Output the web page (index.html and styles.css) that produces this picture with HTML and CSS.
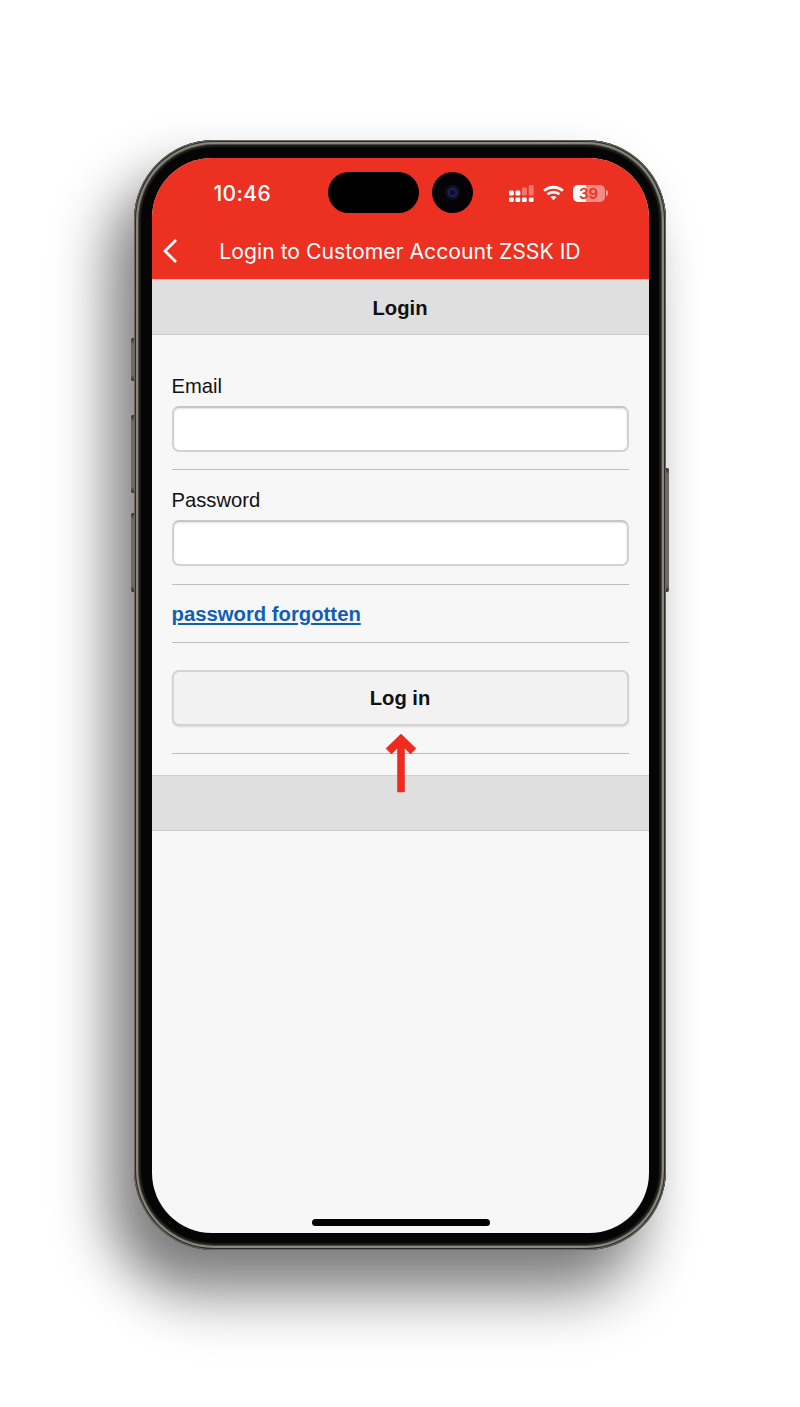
FILE: index.html
```html
<!DOCTYPE html>
<html>
<head>
  <meta charset="utf-8">
  <title>Login</title>
  <link rel="stylesheet" href="styles.css">
</head>
<body>
  <div class="stage">
    <div class="phone">
      <span class="side-btn side-mute"></span>
      <span class="side-btn side-up"></span>
      <span class="side-btn side-down"></span>
      <span class="side-btn side-power"></span>

      <div class="bezel">
        <div class="screen">
          <div class="app-header">
            <div class="status-bar">
              <span class="clock">10:46</span>
              <div class="status-icons">
                <svg class="signal" width="25" height="17" viewBox="0 0 25 17">
                  <g fill="#fff">
                    <rect x="0" y="12.500" width="4.800" height="4.500" rx="1.200"/>
                    <rect x="6.500" y="12.500" width="4.800" height="4.500" rx="1.200"/>
                    <rect x="13" y="12.500" width="4.800" height="4.500" rx="1.200"/>
                    <rect x="19.800" y="12.500" width="4.800" height="4.500" rx="1.200"/>
                    <rect x="0" y="5.500" width="4.800" height="5" rx="1.200"/>
                    <rect x="6.500" y="5.500" width="4.800" height="5" rx="1.200"/>
                    <rect x="13" y="2.500" width="4.800" height="8" rx="1.200" opacity="0.35"/>
                    <rect x="19.800" y="0" width="4.800" height="10.500" rx="1.200" opacity="0.35"/>
                  </g>
                </svg>
                <svg class="wifi" width="21" height="16" viewBox="0 0 22 16">
                  <g fill="none" stroke="#fff" stroke-width="3">
                    <path d="M1.200 5.600C6.600.7 15.400.7 20.800 5.600"/>
                    <path d="M4.800 9.300C8.200 6.300 13.800 6.300 17.200 9.300"/>
                  </g>
                  <path d="M7.900 12.200C9.700 10.800 12.300 10.800 14.100 12.200L11 15.600Z" fill="#fff"/>
                </svg>
                <div class="battery">
                  <div class="battery-body">
                    <span class="battery-level">39</span>
                  </div>
                  <span class="battery-cap"></span>
                </div>
              </div>
            </div>
            <div class="title-bar">
              <svg class="back" width="16" height="26" viewBox="0 0 16 26">
                <path d="M14 2 3 13l11 11" fill="none" stroke="#fff" stroke-width="2.800"/>
              </svg>
              <span class="title">Login to Customer Account ZSSK ID</span>
            </div>
          </div>

          <div class="band band-title">Login</div>

          <div class="form">
            <div class="field">
              <label for="email">Email</label>
              <input type="text" id="email">
            </div>
            <div class="field field-password">
              <label for="password">Password</label>
              <input type="password" id="password">
            </div>
            <div class="link-row">
              <a href="#">password forgotten</a>
            </div>
            <div class="button-row">
              <button class="btn-login">Log in</button>
            </div>
          </div>

          <div class="band band-empty"></div>
          <div class="home-bar"></div>
        </div>

        <div class="island"></div>
        <div class="camera"><span class="lens"></span></div>
        <svg class="arrow" width="32" height="60" viewBox="0 0 32 60">
          <path d="M16 1 31 15.500l-5.500 5.500-6-6V59h-7V15l-6 6L1 15.500Z" fill="#f02a1e" stroke="#d9261a" stroke-width="0.500"/>
        </svg>
      </div>
    </div>
  </div>
</body>
</html>
```

FILE: styles.css
```css
html, body {
  margin: 0;
  padding: 0;
  background: #fff;
}

body {
  font-family: "Liberation Sans", Arial, sans-serif;
  color: #111;
}

.stage {
  width: 800px;
  height: 1407px;
  padding-top: 140px;
  box-sizing: border-box;
  display: flex;
  justify-content: center;
  overflow: hidden;
}

/* phone frame */
.phone {
  position: relative;
  width: 532px;
  height: 1110px;
  box-sizing: border-box;
  padding: 7px;
  border-radius: 80px;
  background: #1c1b19;
  box-shadow:
    inset 0 0 0 1px #6b675f,
    inset 0 0 0 2px #2b2a27,
    inset 0 0 0 4px #8a867d,
    inset 0 0 0 5px #4a4842,
    -26px 34px 55px rgba(0, 0, 0, 0.45),
    -10px 70px 60px -10px rgba(0, 0, 0, 0.14);
}

.bezel {
  position: relative;
  height: 100%;
  box-sizing: border-box;
  padding: 11px 10.500px 10px;
  border-radius: 73px;
  background: #050505;
}

.screen {
  position: relative;
  display: flex;
  flex-direction: column;
  height: 100%;
  border-radius: 60px;
  overflow: hidden;
  background: #f7f7f7;
}

.side-btn {
  position: absolute;
  left: -3px;
  width: 3px;
  background: linear-gradient(180deg, #2c2a27 0, #6e6a64 6px, #6e6a64 calc(100% - 6px), #2c2a27 100%);
  border-radius: 2px 0 0 2px;
}

.side-mute { top: 198px; height: 43px; }
.side-up { top: 275px; height: 78px; }
.side-down { top: 373px; height: 79px; }
.side-power { left: auto; right: -3px; top: 328px; height: 124px; border-radius: 0 2px 2px 0; }

/* red header */
.app-header {
  height: 121px;
  flex: none;
  background: #ec3021;
  color: #fff;
  font-family: Inter, Roboto, sans-serif;
}

.status-bar {
  display: flex;
  justify-content: space-between;
  align-items: center;
  height: 70px;
  padding: 0 41px 0 62px;
}

.clock {
  font-size: 21px;
  font-weight: 500;
  letter-spacing: 0.4px;
}

.status-icons {
  display: flex;
  align-items: center;
  gap: 9px;
}

.battery {
  display: flex;
  align-items: center;
  gap: 1px;
}

.battery-body {
  width: 32px;
  height: 17px;
  border-radius: 5px;
  background: linear-gradient(90deg, #fff 40%, rgba(255, 255, 255, 0.45) 40%);
  display: flex;
  align-items: center;
  justify-content: center;
}

.battery-level {
  font-size: 15px;
  font-weight: 600;
  color: #ec3021;
  line-height: 17px;
}

.battery-cap {
  width: 2px;
  height: 6px;
  border-radius: 0 2px 2px 0;
  background: rgba(255, 255, 255, 0.5);
}

.title-bar {
  position: relative;
  height: 46px;
  display: flex;
  align-items: center;
  justify-content: center;
}

.back {
  position: absolute;
  left: 10px;
  top: 10px;
}

.title {
  font-size: 21.200px;
}

/* grey bands */
.band {
  flex: none;
  box-sizing: border-box;
  height: 56px;
  background: #dfdfdf;
  border-bottom: 1px solid #cbcbcb;
}

.band-title {
  line-height: 56px;
  text-align: center;
  font-size: 20.200px;
  font-weight: bold;
  border-top: 1px solid #cfcfcf;
}

.band-empty {
  border-top: 1px solid #d0d0d0;
}

/* form */
.form {
  padding: 0 20px 22px;
  flex: none;
  height: 440px;
  box-sizing: border-box;
}

.field {
  padding-top: 39px;
  height: 135px;
  box-sizing: border-box;
  border-bottom: 1px solid #bebebe;
}

.field-password {
  padding-top: 18px;
  height: 115px;
}

.field label {
  display: block;
  font-size: 20.200px;
  line-height: 24px;
  margin-bottom: 8px;
}

.field input {
  display: block;
  width: 100%;
  height: 46px;
  box-sizing: border-box;
  background: #fff;
  border: 2px solid #d2d2d2;
  border-top-color: #c6c6c6;
  border-radius: 7px;
  box-shadow: inset 0 1px 2px rgba(0, 0, 0, 0.12);
  outline: none;
}

.link-row {
  height: 58px;
  box-sizing: border-box;
  padding-top: 2px;
  border-bottom: 1px solid #bebebe;
  display: flex;
  align-items: center;
}

.link-row a {
  color: #0f5fb5;
  font-size: 20.300px;
  font-weight: bold;
}

.button-row {
  height: 111px;
  box-sizing: border-box;
  padding-top: 27px;
  border-bottom: 1px solid #bebebe;
}

.btn-login {
  display: block;
  width: 100%;
  height: 56px;
  background: #f2f2f2;
  border: 2px solid #d4d4d4;
  border-radius: 7px;
  color: #111;
  font: bold 20.200px "Liberation Sans", Arial, sans-serif;
  box-shadow: 0 1px 2px rgba(0, 0, 0, 0.12);
}

.home-bar {
  position: absolute;
  left: 160.500px;
  bottom: 7px;
  width: 178px;
  height: 7px;
  border-radius: 4px;
  background: #000;
}

/* things lying over the screen */
.island {
  position: absolute;
  left: 187px;
  top: 25px;
  width: 91px;
  height: 41px;
  border-radius: 21px;
  background: #000;
}

.camera {
  position: absolute;
  left: 291px;
  top: 25px;
  width: 41px;
  height: 41px;
  border-radius: 50%;
  background: #050308;
  display: flex;
  align-items: center;
  justify-content: center;
}

.lens {
  width: 9px;
  height: 9px;
  border-radius: 50%;
  background: radial-gradient(circle, #0c0d2a 30%, #25307e 75%);
  box-shadow: 0 0 0 3px #12101a;
}

.arrow {
  position: absolute;
  left: 244px;
  top: 586px;
}
```
